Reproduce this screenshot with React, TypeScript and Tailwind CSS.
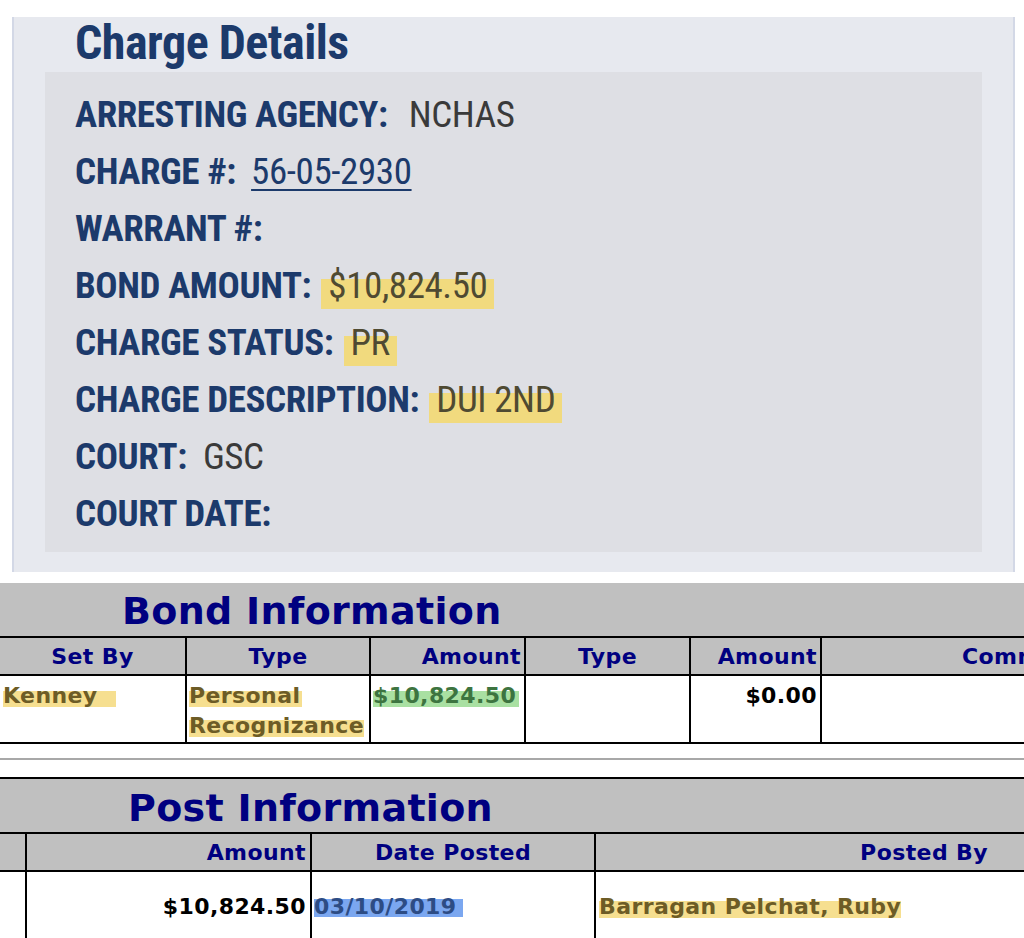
import React from 'react';

const cond = { fontFamily: '"Roboto Condensed", "Liberation Sans Narrow", "DejaVu Sans Condensed", Roboto, sans-serif' };
const verd = { fontFamily: 'Verdana, "DejaVu Sans", sans-serif' };

const rows: { label: string; value?: string; kind?: 'plain' | 'link' | 'mark'; gap?: string }[] = [
  { label: 'ARRESTING AGENCY:', value: 'NCHAS', kind: 'plain', gap: 'ml-[21px]' },
  { label: 'CHARGE #:', value: '56-05-2930', kind: 'link' },
  { label: 'WARRANT #:' },
  { label: 'BOND AMOUNT:', value: '$10,824.50', kind: 'mark' },
  { label: 'CHARGE STATUS:', value: 'PR', kind: 'mark' },
  { label: 'CHARGE DESCRIPTION:', value: 'DUI 2ND', kind: 'mark' },
  { label: 'COURT:', value: 'GSC', kind: 'plain' },
  { label: 'COURT DATE:' },
];

function Value({ row }: { row: (typeof rows)[number] }) {
  if (!row.value) return null;
  if (row.kind === 'link')
    return <span className="ml-[15px] text-[#1c3a6b] underline underline-offset-[5px] decoration-2">{row.value}</span>;
  if (row.kind === 'mark')
    return (
      <span className="ml-[10px] px-[7px] text-[#4f4a32] bg-[linear-gradient(to_bottom,transparent_38%,#f1da7e_38%,#f1da7e_92%,transparent_92%)]">
        {row.value}
      </span>
    );
  return <span className={`${row.gap ?? 'ml-[16px]'} text-[#3a3a3a]`}>{row.value}</span>;
}

// yellow / green / blue marker on the lower part of text
const yellow = 'bg-[linear-gradient(to_bottom,transparent_30%,#f6df90_30%,#f6df90_96%,transparent_96%)] text-[#6d5c26]';
const green = 'bg-[linear-gradient(to_bottom,transparent_30%,#a9e0a2_30%,#a9e0a2_96%,transparent_96%)] text-[#3d7440]';
const blue = 'bg-[linear-gradient(to_bottom,transparent_22%,#7ba7f0_22%,#7ba7f0_92%,transparent_92%)] text-[#2d4c84]';

export default function App() {
  return (
    <div className="w-[1024px] h-[938px] bg-white overflow-hidden">
      {/* Charge details card */}
      <div className="ml-[12px] mt-[17px] w-[1003px] h-[555px] bg-[#e7e9ef] border-l-2 border-r-2 border-[#d3d8e6] pl-[31px] pr-[31px]" style={cond}>
        <h1 className="h-[55px] pl-[30px] text-[48px] leading-[52px] font-bold text-[#1c3a6b] tracking-[-0.5px]">Charge Details</h1>
        <div className="h-[480px] bg-[#dedfe4] pl-[30px] pt-[14px] pb-[10px]">
          {rows.map((r) => (
            <div key={r.label} className="h-[57px] flex items-center text-[37px] tracking-[-0.4px]">
              <span className="font-bold text-[#1c3a6b]">{r.label}</span>
              <Value row={r} />
            </div>
          ))}
        </div>
      </div>

      {/* Bond information */}
      <div className="mt-[11px] w-[1024px] overflow-hidden" style={verd}>
        <div className="bg-[#c0c0c0]">
          <div className="h-[53px] pl-[122px] flex items-end pb-[6px] text-[38px] leading-none font-bold text-[#000080] tracking-[0.3px]">
            Bond Information
          </div>
          <div className="grid grid-cols-[185px_184px_155px_165px_131px_1fr] border-t-2 border-b-2 border-black h-[40px] text-[22px] font-bold text-[#000080] tracking-[0.4px]">
            <div className="flex items-center justify-center">Set By</div>
            <div className="flex items-center justify-center border-l-2 border-black">Type</div>
            <div className="flex items-center justify-end pr-[3px] border-l-2 border-black">Amount</div>
            <div className="flex items-center justify-center border-l-2 border-black">Type</div>
            <div className="flex items-center justify-end pr-[3px] border-l-2 border-black">Amount</div>
            <div className="flex items-center pl-[140px] border-l-2 border-black whitespace-nowrap overflow-hidden">Comments</div>
          </div>
        </div>
        <div className="grid grid-cols-[185px_184px_155px_165px_131px_1fr] border-b-2 border-black h-[68px] bg-white text-[22px] font-bold leading-[30px] tracking-[0.4px]">
          <div className="pt-[5px] pl-[3px]">
            <span className={`${yellow} pr-[18px]`}>Kenney</span>
          </div>
          <div className="pt-[5px] pl-[2px] border-l-2 border-black">
            <span className={`${yellow} pr-[2px]`}>Personal</span>
            <br />
            <span className={yellow}>Recognizance</span>
          </div>
          <div className="pt-[5px] pl-[2px] border-l-2 border-black whitespace-nowrap">
            <span className={`${green} pr-[3px]`}>$10,824.50</span>
          </div>
          <div className="border-l-2 border-black" />
          <div className="pt-[5px] pr-[3px] text-right text-black border-l-2 border-black">$0.00</div>
          <div className="border-l-2 border-black" />
        </div>

        <div className="mt-[14px] h-[2px] bg-[#a8a8a8]" />

        {/* Post information */}
        <div className="mt-[17px] bg-[#c0c0c0] border-t-2 border-black">
          <div className="h-[53px] pl-[128px] flex items-end pb-[5px] text-[38px] leading-none font-bold text-[#000080] tracking-[0.3px]">
            Post Information
          </div>
          <div className="grid grid-cols-[25px_285px_284px_1fr] border-t-2 border-b-2 border-black h-[40px] text-[22px] font-bold text-[#000080] tracking-[0.4px]">
            <div />
            <div className="flex items-center justify-end pr-[4px] border-l-2 border-black">Amount</div>
            <div className="flex items-center justify-center border-l-2 border-black">Date Posted</div>
            <div className="flex items-center justify-end pr-[36px] border-l-2 border-black">Posted By</div>
          </div>
        </div>
        <div className="grid grid-cols-[25px_285px_284px_1fr] h-[80px] bg-white text-[22px] font-bold leading-[30px] tracking-[0.4px]">
          <div />
          <div className="pt-[20px] pr-[4px] text-right text-black border-l-2 border-black">$10,824.50</div>
          <div className="pt-[20px] pl-[2px] border-l-2 border-black">
            <span className={`${blue} pr-[6px]`}>03/10/2019</span>
          </div>
          <div className="pt-[20px] pl-[3px] border-l-2 border-black">
            <span className={yellow}>Barragan Pelchat, Ruby</span>
          </div>
        </div>
      </div>
    </div>
  );
}
